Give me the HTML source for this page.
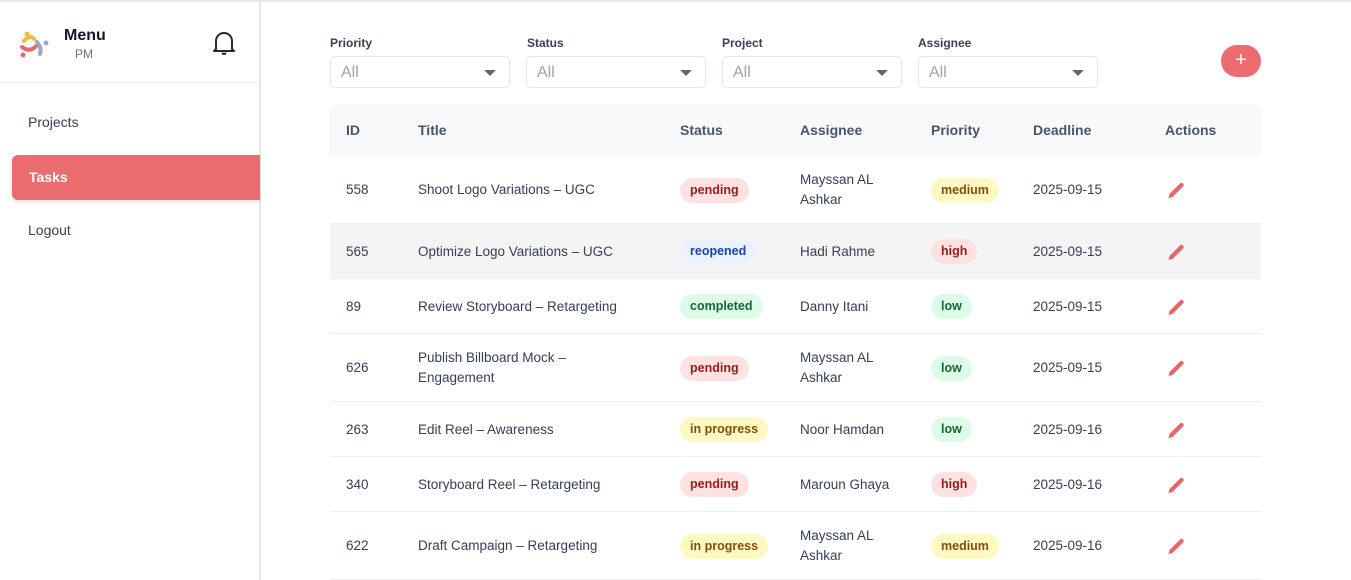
<!DOCTYPE html>
<html><head><meta charset="utf-8"><style>
*{box-sizing:border-box;margin:0;padding:0}
body{width:1351px;height:580px;overflow:hidden;background:#fff;font-family:"Liberation Sans",sans-serif;color:#1f2937;position:relative}
.top{position:absolute;left:0;top:0;width:1351px;height:2px;background:#e5e7eb}
.side{position:absolute;left:0;top:2px;width:261px;height:578px;border-right:2px solid #e5e7eb;background:#fff}
.hd{height:81px;border-bottom:1px solid #eef0f3;position:relative}
.menu{position:absolute;left:64px;top:25px;font-size:16px;font-weight:bold;color:#111827}
.pm{position:absolute;left:75px;top:45px;font-size:12px;color:#6b7280}
.nav{position:absolute;left:28px;font-size:14px;color:#374151}
.tasks{position:absolute;left:12px;top:153px;width:248px;height:45px;background:#eb6c6f;border-radius:6px 0 0 6px;box-shadow:0 2px 4px rgba(0,0,0,.12);color:#fff;font-weight:bold;font-size:14px;padding:14px 0 0 17px}
.lbl{position:absolute;top:36px;font-size:12px;font-weight:bold;color:#374151}
.sel{position:absolute;top:56px;width:180px;height:32px;border:1px solid #e2e6ee;border-radius:5px;font-size:16px;color:#9ca3af;padding:7px 0 0 10px}
.sel:after{content:"";position:absolute;right:13px;top:13px;border-left:6px solid transparent;border-right:6px solid transparent;border-top:6px solid #666}
.plus{position:absolute;left:1221px;top:45px;width:40px;height:32px;border-radius:16px;background:#eb6c6f;color:#fff;font-size:20px;text-align:center;line-height:31px}
table{position:absolute;left:330px;top:104px;width:931px;border-collapse:collapse;font-size:13.5px;color:#334155}
th{height:52px;background:#f8f9fb;text-align:left;font-weight:bold;color:#475569;padding-left:16px;font-size:14px}
th:first-child{border-top-left-radius:8px}th:last-child{border-top-right-radius:8px}
td{padding-left:16px;border-bottom:1px solid #eceef1;line-height:20px;padding-top:2px}
tr.g td{background:#f4f4f4}
.b{display:inline-block;height:25px;line-height:25px;padding:0 10px;border-radius:13px;font-size:12.5px;font-weight:bold}
.r{background:#fee2e2;color:#991b1b}.bl{background:#eaf2ff;color:#1e40af}.gr{background:#dcfce7;color:#166534}.y{background:#fef9c3;color:#854d0e}
</style></head><body>
<div class="top"></div>
<div class="side">
<div class="hd">
<svg style="position:absolute;left:18px;top:28px" width="32" height="30" viewBox="0 0 32 30"><circle cx="9" cy="4" r="2.5" fill="#f5b93b"/><path d="M6 11 Q12 4 16 9" stroke="#f5b93b" stroke-width="4" fill="none" stroke-linecap="round"/><path d="M4 17 Q12 23 18 16" stroke="#e8656a" stroke-width="4" fill="none" stroke-linecap="round"/><circle cx="5" cy="25" r="2.5" fill="#e8656a"/><path d="M19 12 Q24 18 22 24" stroke="#9aa8c6" stroke-width="4" fill="none" stroke-linecap="round"/><circle cx="28" cy="13" r="2.5" fill="#9aa8c6"/></svg>
<div class="menu">Menu</div><div class="pm">PM</div>
<svg style="position:absolute;left:212px;top:28px" width="24" height="26" viewBox="0 0 24 26" fill="none" stroke="#1f2937" stroke-width="2"><path d="M4 19 L4 11 A8 8 0 0 1 20 11 L20 19 L22 21 L2 21 Z" stroke-linejoin="round"/><path d="M10 23 Q12 25 14 23"/></svg>
</div>
<div class="nav" style="top:112px">Projects</div>
<div class="tasks" style="top:153px">Tasks</div>
<div class="nav" style="top:220px">Logout</div>
</div>
<div class="lbl" style="left:330px">Priority</div><div class="sel" style="left:330px">All</div>
<div class="lbl" style="left:527px">Status</div><div class="sel" style="left:526px">All</div>
<div class="lbl" style="left:722px">Project</div><div class="sel" style="left:722px">All</div>
<div class="lbl" style="left:918px">Assignee</div><div class="sel" style="left:918px">All</div>
<div class="plus">+</div>
<table>
<colgroup><col style="width:72px"><col style="width:262px"><col style="width:120px"><col style="width:131px"><col style="width:102px"><col style="width:132px"><col style="width:112px"></colgroup>
<tr><th>ID</th><th>Title</th><th>Status</th><th>Assignee</th><th>Priority</th><th>Deadline</th><th>Actions</th></tr>
<tr style="height:67px"><td>558</td><td>Shoot Logo Variations – UGC</td><td><span class="b r">pending</span></td><td>Mayssan AL<br>Ashkar</td><td><span class="b y">medium</span></td><td>2025-09-15</td><td>P</td></tr>
<tr class="g" style="height:55px"><td>565</td><td>Optimize Logo Variations – UGC</td><td><span class="b bl">reopened</span></td><td>Hadi Rahme</td><td><span class="b r">high</span></td><td>2025-09-15</td><td>P</td></tr>
<tr style="height:55px"><td>89</td><td>Review Storyboard – Retargeting</td><td><span class="b gr">completed</span></td><td>Danny Itani</td><td><span class="b gr">low</span></td><td>2025-09-15</td><td>P</td></tr>
<tr style="height:68px"><td>626</td><td>Publish Billboard Mock –<br>Engagement</td><td><span class="b r">pending</span></td><td>Mayssan AL<br>Ashkar</td><td><span class="b gr">low</span></td><td>2025-09-15</td><td>P</td></tr>
<tr style="height:55px"><td>263</td><td>Edit Reel – Awareness</td><td><span class="b y">in progress</span></td><td>Noor Hamdan</td><td><span class="b gr">low</span></td><td>2025-09-16</td><td>P</td></tr>
<tr style="height:55px"><td>340</td><td>Storyboard Reel – Retargeting</td><td><span class="b r">pending</span></td><td>Maroun Ghaya</td><td><span class="b r">high</span></td><td>2025-09-16</td><td>P</td></tr>
<tr style="height:68px"><td>622</td><td>Draft Campaign – Retargeting</td><td><span class="b y">in progress</span></td><td>Mayssan AL<br>Ashkar</td><td><span class="b y">medium</span></td><td>2025-09-16</td><td>P</td></tr>
</table>
<script>
document.querySelectorAll('td:last-child').forEach(function(t){t.innerHTML='<svg width="22" height="22" viewBox="0 0 22 22" style="vertical-align:middle"><path d="M3.5 19 L4.5 15 L15 4.5 Q16.5 3 18 4.5 Q19.5 6 18 7.5 L7.5 18 Z" fill="#e8656a"/></svg>';});
</script>
</body></html>
